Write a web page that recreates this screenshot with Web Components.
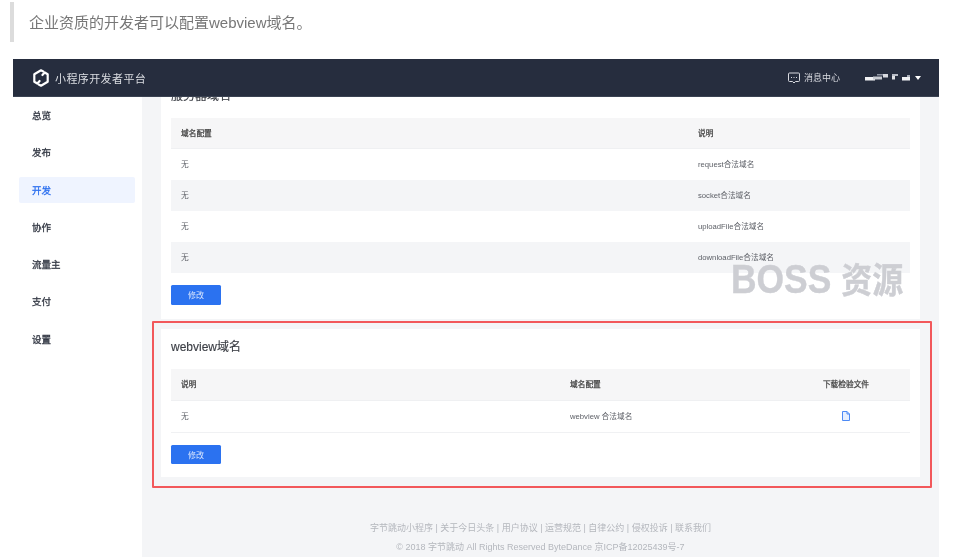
<!DOCTYPE html>
<html lang="zh"><head><meta charset="utf-8">
<style>
html,body{margin:0;padding:0;background:#fff;}
body{width:959px;height:557px;overflow:hidden;position:relative;font-family:"Liberation Sans","Noto Sans CJK SC",sans-serif;}
</style></head><body>
<doc-quote>企业资质的开发者可以配置webview域名。</doc-quote>
<app-shell></app-shell>
<water-mark>BOSS <span style="font-size:35px">资源</span></water-mark>
<red-box></red-box>
<script>
const F='"Liberation Sans","Noto Sans CJK SC",sans-serif';
function def(name,html){
  customElements.define(name,class extends HTMLElement{
    connectedCallback(){
      if(this.shadowRoot)return;
      const r=this.attachShadow({mode:'open'});
      r.innerHTML=typeof html==='function'?html(this):html;
    }
  });
}
def('doc-quote',`<style>
:host{display:block;margin:2px 0 17px 10px;height:40px;box-sizing:border-box;border-left:4px solid #dcdcdc;padding:12px 0 0 15px;
font:15px/18px ${F};color:#777;filter:blur(.25px)}
</style><slot></slot>`);
def('top-bar',`<style>
:host{display:flex;align-items:center;height:38px;background:#262d3e;color:#dcdee3;box-sizing:border-box;padding:0 18px 0 19px;border-bottom:1px solid #3a4252;flex:none;position:relative;z-index:2}
.logo{display:block;margin-right:5px}
.name{font-size:11px;letter-spacing:.4px;flex:1}
.msg{display:flex;align-items:center;gap:4px;font-size:9px;margin-right:25px;color:#d8dae0}
.user{display:flex;align-items:center;gap:5px}
</style>
<svg class="logo" width="18" height="18" viewBox="0 0 18 18" fill="none" stroke="#fff" stroke-width="2.200" stroke-linejoin="round" stroke-linecap="round">
<path d="M11.300 2.400 9 1.300 2.300 5.200V12.700L5.300 14.500 7.600 12"/>
<path d="M6.700 15.600 9 16.700 15.700 12.800V5.300L12.700 3.500 10.400 6"/></svg>
<span class="name">小程序开发者平台</span>
<span class="msg"><svg width="12" height="12" viewBox="0 0 12 12" fill="none" stroke="#d8dae0"><path d="M1.500 1h9a1 1 0 0 1 1 1v6.500a1 1 0 0 1-1 1H7.500L6 11 4.500 9.500h-3a1 1 0 0 1-1-1V2a1 1 0 0 1 1-1z"/><path d="M3 5.500h1M5.500 5.500h1M8 5.500h1"/></svg>消息中心</span>
<span class="user"><svg width="45" height="7" viewBox="0 0 45 7"><rect x="0" y="3" width="10" height="3.500" fill="#f2f3f5"/><rect x="8" y="2.500" width="9" height="3" fill="#c8cbd2"/><rect x="12" y="0" width="6" height="1.500" fill="#8f95a3"/><rect x="18" y="0" width="5" height="3.500" fill="#d8dae0"/><rect x="27" y="0" width="6" height="2" fill="#b8bcc6"/><rect x="27" y="2" width="3" height="3.500" fill="#e0e2e6"/><rect x="37" y="3" width="8" height="3.500" fill="#f2f3f5"/><rect x="42" y="1" width="3" height="2" fill="#a8adb8"/></svg>
<svg width="6" height="4" viewBox="0 0 6 4"><path d="M0 0h6L3 4z" fill="#fff"/></svg></span>`);
def('side-item',`<style>
:host{display:flex;align-items:center;height:26px;margin:0 7px 11.300px 6px;padding-left:13px;border-radius:2px;font-size:9.500px;color:#333844;-webkit-text-stroke:.3px currentColor}
:host([active]){background:#eff4ff;color:#2c6fef}
</style><slot></slot>`);
def('side-nav',`<style>
:host{display:block;width:129px;flex:none;background:#fff;padding-top:5px;box-sizing:border-box}
</style><slot></slot>`);
def('t-row',`<style>
:host{display:grid;grid-template-columns:var(--cols);height:31px;box-sizing:border-box;align-items:center;font-size:7.700px;color:#5c5f66;padding:0 0 2px 10px}
:host([head]){background:#f6f6f7;color:#444;border-bottom:1px solid #eff0f2;-webkit-text-stroke:.25px currentColor}
:host([stripe]){background:#f4f5f7}
:host([line]){border-bottom:1px solid #f0f1f3}
</style><slot></slot>`);
def('t-cell',`<style>:host{display:block}:host([center]){text-align:center;display:flex;justify-content:center}</style><slot></slot>`);
def('blue-btn',`<style>
:host{display:flex;align-items:center;justify-content:center;width:50px;height:19.500px;background:#2b72f0;border-radius:1.500px;color:#d8e5fd;font-size:8px}
</style><slot></slot>`);
def('panel-card',(h)=>`<style>
:host{display:block;background:#fff;box-sizing:border-box;padding:0 10px;margin:0 19px}
h2{margin:0;font-weight:400;font-size:12px;line-height:18px;color:#3c3f46;height:31px;padding-top:9px;-webkit-text-stroke:.15px currentColor}
</style><h2>${h.getAttribute('heading')}</h2><slot></slot>`);
def('red-box',`<style>
:host{display:block;position:absolute;left:152px;top:321px;width:780px;height:167px;box-sizing:border-box;border:2px solid #f2585b;pointer-events:none;border-radius:1px}
</style>`);
def('site-foot',`<style>
:host{display:block;text-align:center;color:#b4b7bd;font-size:9px;line-height:19px;margin-top:42px}
</style><div>字节跳动小程序 | 关于今日头条 | 用户协议 | 运营规范 | 自律公约 | 侵权投诉 | 联系我们</div><div>© 2018 字节跳动 All Rights Reserved ByteDance 京ICP备12025439号-7</div>`);
def('main-area',`<style>
:host{display:block;flex:1;background:#f4f5f7;overflow:hidden;min-width:0}
.in{margin-top:-19px}
</style><div class="in"><slot></slot></div>`);
def('app-shell',`<style>
:host{display:flex;flex-direction:column;margin-left:13px;width:926px;height:498px;overflow:hidden;font-family:${F};filter:blur(.3px)}
.body{display:flex;flex:1;min-height:0}
.gap{height:10px}
.btn{padding-top:12px;padding-bottom:14px}
.btn2{padding-top:12px;padding-bottom:12.500px}
svg{display:block}
</style>
<top-bar></top-bar>
<div class="body">
<side-nav><side-item>总览</side-item><side-item>发布</side-item><side-item active>开发</side-item><side-item>协作</side-item><side-item>流量主</side-item><side-item>支付</side-item><side-item>设置</side-item></side-nav>
<main-area>
<panel-card heading="服务器域名" style="--cols:517px 213px">
<t-row head><t-cell>域名配置</t-cell><t-cell>说明</t-cell></t-row>
<t-row><t-cell>无</t-cell><t-cell>request合法域名</t-cell></t-row>
<t-row stripe><t-cell>无</t-cell><t-cell>socket合法域名</t-cell></t-row>
<t-row><t-cell>无</t-cell><t-cell>uploadFile合法域名</t-cell></t-row>
<t-row stripe><t-cell>无</t-cell><t-cell>downloadFile合法域名</t-cell></t-row>
<div class="btn"><blue-btn>修改</blue-btn></div>
</panel-card>
<div class="gap"></div>
<panel-card heading="webview域名" style="--cols:389px 211px 130px">
<t-row head style="height:32px"><t-cell>说明</t-cell><t-cell>域名配置</t-cell><t-cell center>下载检验文件</t-cell></t-row>
<t-row line style="height:32px"><t-cell>无</t-cell><t-cell>webview 合法域名</t-cell><t-cell center><svg width="8" height="10" viewBox="0 0 8 10" fill="#e6efff" stroke="#4d8af5" style="margin-top:2px"><path d="M.5.500H5L7.500 3v6.500H.5z"/><path d="M5 .5V3h2.500" fill="none"/></svg></t-cell></t-row>
<div class="btn2"><blue-btn>修改</blue-btn></div>
</panel-card>
<site-foot></site-foot>
</main-area>
</div>`);
def('water-mark',`<style>
:host{position:absolute;left:731px;top:262px;font:700 40px/34px ${F};color:#cdced3;white-space:nowrap;transform:scaleX(.885);transform-origin:0 0;filter:blur(.3px);-webkit-text-stroke:.4px #cdced3}
</style><slot></slot>`);
</script>
</body></html>
